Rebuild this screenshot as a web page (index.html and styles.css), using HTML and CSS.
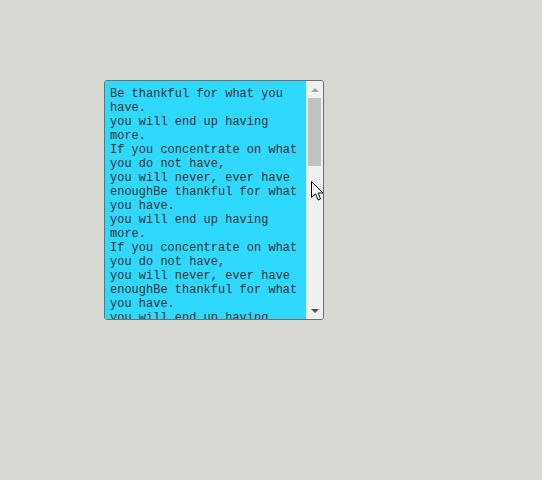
FILE: index.html
```html
<!DOCTYPE html>
<html>
<head>
<meta charset="utf-8">
<link rel="stylesheet" href="styles.css">
</head>
<body>
<div class="stage">
<div class="box">
<textarea class="quote">Be thankful for what you have.
you will end up having more.
If you concentrate on what you do not have,
you will never, ever have enoughBe thankful for what you have.
you will end up having more.
If you concentrate on what you do not have,
you will never, ever have enoughBe thankful for what you have.
you will end up having more.
If you concentrate on what you do not have,
you will never, ever have enough</textarea>
<div class="scrollbar">
<div class="sb-btn"><span class="arrow-up"></span></div>
<div class="sb-track"><div class="sb-thumb"></div></div>
<div class="sb-btn"><span class="arrow-down"></span></div>
</div>
</div>
<svg class="cursor" width="13" height="21" viewBox="0 0 13 21"><path d="M0.5 0.5 L0.5 16.5 L4.5 12.8 L7.2 19 L9.6 18 L7 12 L12 12 Z" fill="#fff" stroke="#000" stroke-width="1" stroke-linejoin="miter"/></svg>
</div>
</body>
</html>
```
FILE: styles.css
```css
html, body {
  margin: 0;
  padding: 0;
  background: #d8d8d4;
  width: 542px;
  height: 480px;
  overflow: hidden;
}
.stage {
  position: relative;
  padding: 80px 0 0 104px;
}
.box {
  display: flex;
  box-sizing: border-box;
  width: 220px;
  height: 240px;
  border: 1px solid #6f6f6f;
  border-radius: 3px;
  overflow: hidden;
  background: #f0f0f0;
}
.quote {
  display: block;
  flex: 1;
  min-width: 0;
  box-sizing: border-box;
  height: 100%;
  margin: 0;
  padding: 6px 0 0 5px;
  border: 0;
  background: #2fd8fd;
  color: #333;
  font-family: "Liberation Mono", monospace;
  font-size: 12px;
  line-height: 14px;
  resize: none;
  overflow: hidden;
  outline: none;
}
.scrollbar {
  width: 17px;
  flex: none;
  display: flex;
  flex-direction: column;
  background: #f0f0f0;
}
.sb-btn {
  height: 17px;
  display: flex;
  align-items: center;
  justify-content: center;
}
.arrow-up {
  width: 0;
  height: 0;
  border-left: 4px solid transparent;
  border-right: 4px solid transparent;
  border-bottom: 4px solid #a3a3a3;
}
.arrow-down {
  width: 0;
  height: 0;
  border-left: 4px solid transparent;
  border-right: 4px solid transparent;
  border-top: 4px solid #505050;
}
.sb-track {
  flex: 1;
  padding: 0 2px;
}
.sb-thumb {
  height: 68px;
  background: #c1c1c1;
}
.cursor {
  position: absolute;
  left: 311px;
  top: 181px;
}
```
